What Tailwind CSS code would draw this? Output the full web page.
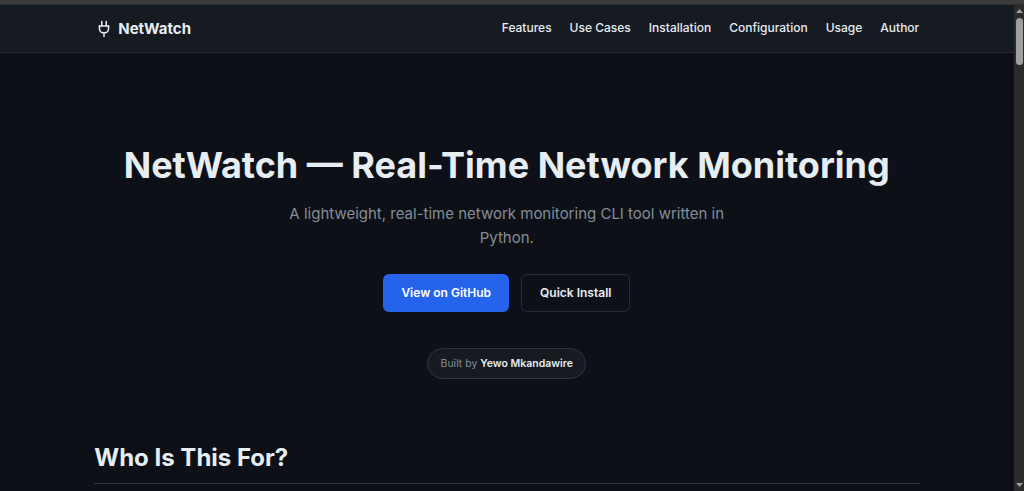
<!DOCTYPE html>
<html lang="en">
<head>
  <meta charset="UTF-8">
  <meta name="viewport" content="width=device-width, initial-scale=1.0">
  <title>NetWatch</title>
  <script src="https://cdn.jsdelivr.net/npm/@tailwindcss/browser@4"></script>
</head>
<body class="h-screen overflow-hidden flex flex-col bg-[#0d1117] text-[#e6edf3] font-['Inter',sans-serif]">

  <!-- Window edge -->
  <div class="h-[5px] shrink-0 bg-[#3c3c3a] border-b border-[#2e3131]"></div>

  <div class="flex flex-1 min-h-0">
    <div class="flex-1 min-w-0 overflow-hidden">

      <!-- Header section -->
      <header class="h-12 bg-[#161b22] border-b border-[#272d35]">
        <div class="w-[825px] mx-auto h-full flex justify-between items-center">
          <a href="#" class="flex items-center gap-[5px] text-[15px] font-bold">
            <svg class="ml-px w-[18px] h-[18px]" viewBox="0 0 24 24" fill="none" stroke="currentColor" stroke-width="2" stroke-linecap="round" stroke-linejoin="round">
              <path d="M12 22v-5" />
              <path d="M9 8V2" />
              <path d="M15 8V2" />
              <path d="M5.5 8h13" />
              <path d="M18 8v4a5 5 0 0 1-5 5h-2a5 5 0 0 1-5-5V8" />
            </svg>
            <span class="pt-px">NetWatch</span>
          </a>
          <nav class="flex gap-[18px] pb-0.5 text-xs font-medium">
            <a href="#">Features</a>
            <a href="#">Use Cases</a>
            <a href="#">Installation</a>
            <a href="#">Configuration</a>
            <a href="#">Usage</a>
            <a href="#">Author</a>
          </nav>
        </div>
      </header>

      <!-- Hero section -->
      <section class="pt-[91px] flex flex-col items-center text-center">
        <h1 class="text-4xl leading-[43px] font-bold whitespace-nowrap">NetWatch — Real-Time Network Monitoring</h1>
        <p class="mt-[15px] w-[450px] text-[15px] leading-6 text-[#848d97]">A lightweight, real-time network monitoring CLI tool written in Python.</p>
        <div class="mt-6 flex gap-3 text-xs font-semibold">
          <a href="#" class="w-[126px] h-[38px] flex items-center justify-center rounded-md bg-[#2563eb] text-white">View on GitHub</a>
          <a href="#" class="w-[109px] h-[38px] flex items-center justify-center rounded-md border border-[#272d35]">Quick Install</a>
        </div>
        <div class="mt-9 w-[159px] h-[31px] flex items-center justify-center gap-[3px] rounded-full bg-[#161b22] border border-[#30363d] text-[10.5px] text-[#848d97]">
          Built by <span class="font-semibold text-[#e6edf3]">Yewo Mkandawire</span>
        </div>
      </section>

      <!-- Audience section -->
      <section class="w-[826px] mx-auto mt-[60px]">
        <h2 class="h-[45px] pt-[3px] pl-[0.5px] text-2xl leading-[32px] font-bold border-b border-[#30363d]">Who Is This For?</h2>
      </section>
    </div>

    <!-- Scrollbar -->
    <div class="w-[10.5px] pl-px shrink-0 bg-[#2b2b2b] flex flex-col items-center pt-1 pb-1">
      <svg class="w-[7px] h-1" viewBox="0 0 7 4" fill="#9f9f9f"><path d="M3.5 0 7 4H0Z" /></svg>
      <div class="mt-[5px] w-[7px] h-[47px] rounded-full bg-[#9f9f9f]"></div>
      <svg class="mt-auto w-[7px] h-1" viewBox="0 0 7 4" fill="#9f9f9f"><path d="M0 0h7L3.5 4Z" /></svg>
    </div>
  </div>

</body>
</html>
